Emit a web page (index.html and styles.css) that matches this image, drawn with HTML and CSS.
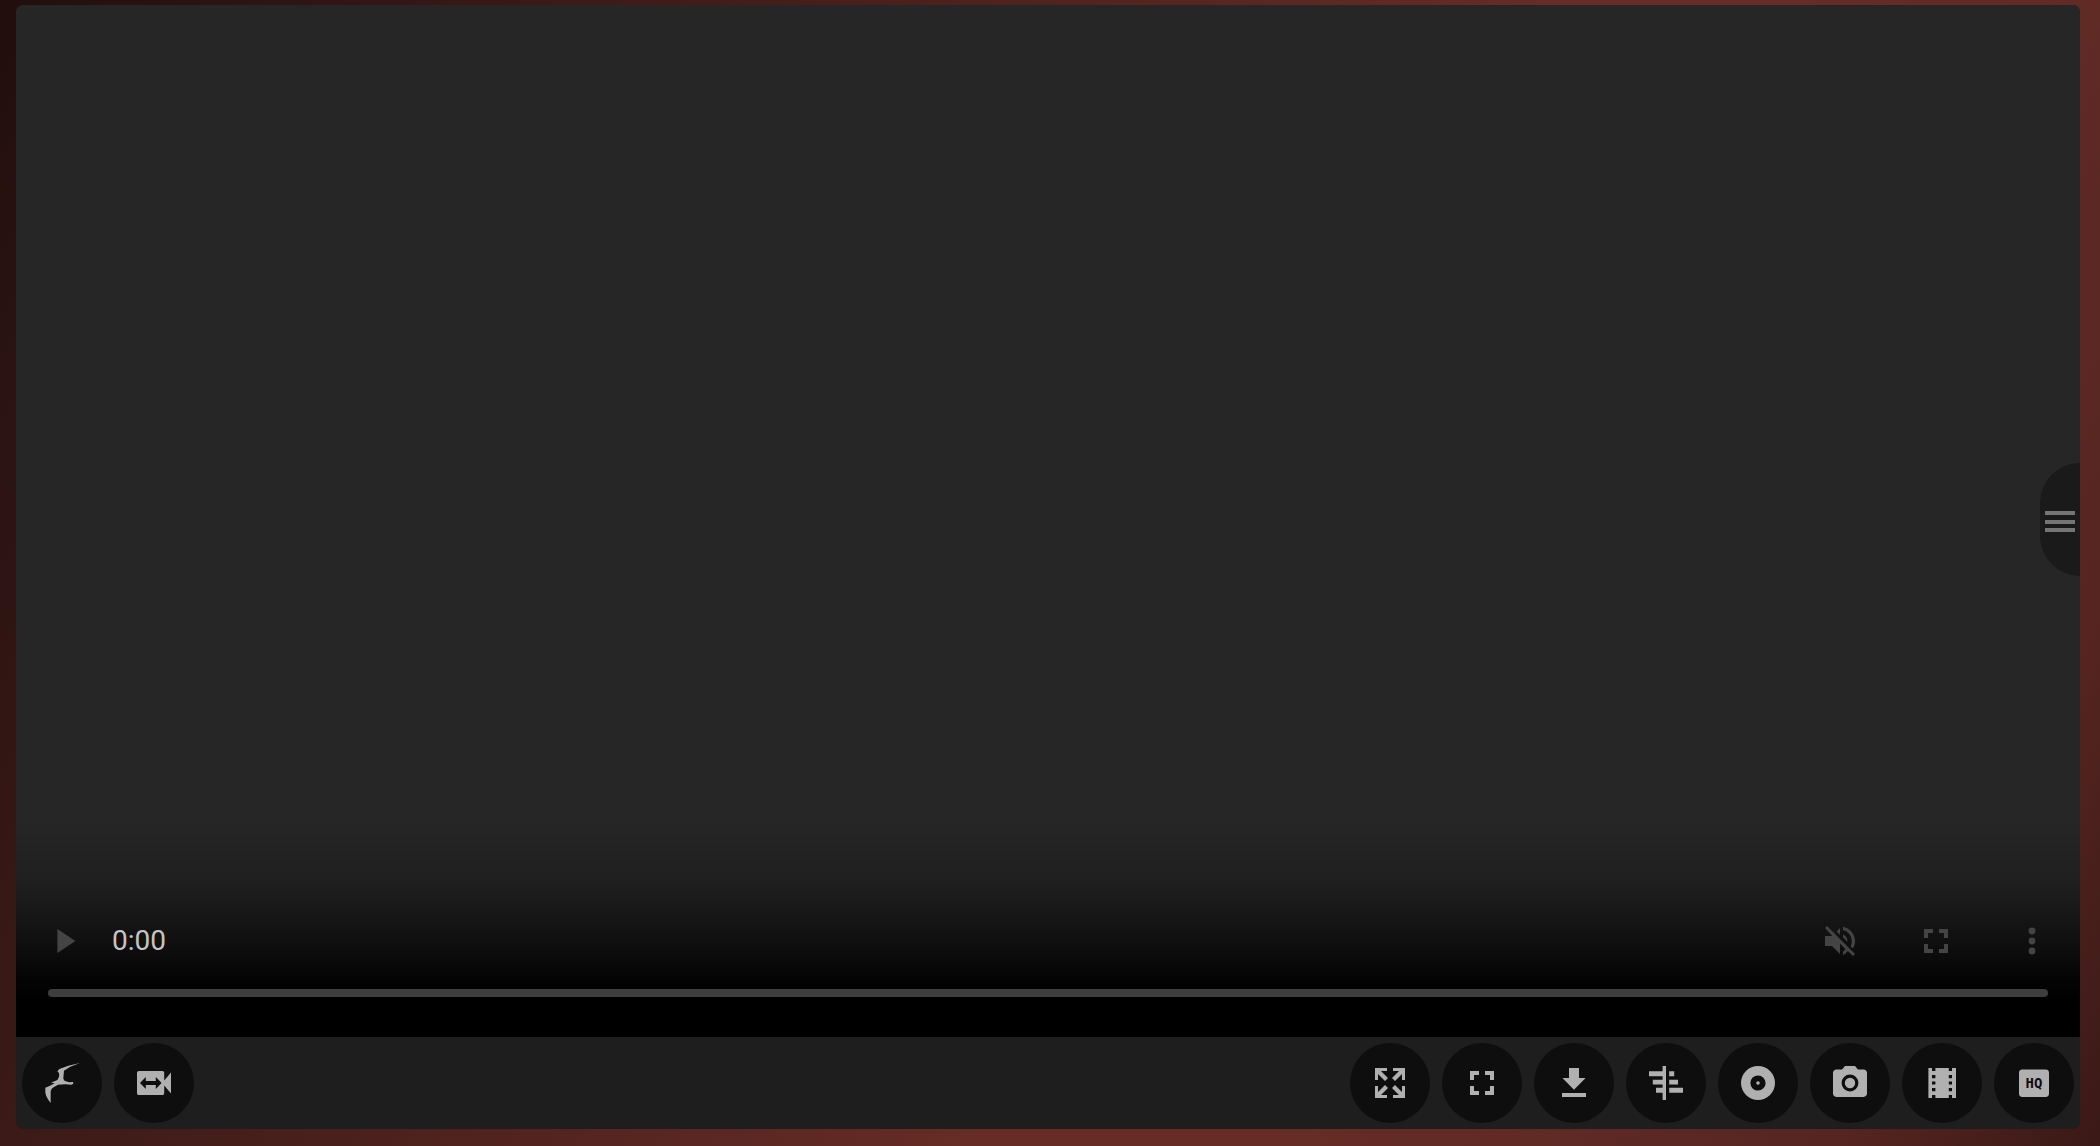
FILE: index.html
```html
<!DOCTYPE html>
<html lang="en">
<head>
  <meta charset="UTF-8">
  <meta name="viewport" content="width=device-width, initial-scale=1.0">
  <title>Video Player</title>
  <link rel="stylesheet" href="styles.css">
</head>
<body>
  <main class="player">
    <!-- Video area -->
    <section class="video" aria-label="Video">
      <button class="side-menu" type="button" aria-label="Open menu">
        <svg class="menu-icon" viewBox="0 0 30 22"><path d="M0 0h30v4H0zM0 9h30v4H0zM0 17h30v4H0z"/></svg>
      </button>

      <div class="controls">
        <div class="control-row">
          <button class="control-button" type="button" aria-label="Play">
            <svg class="icon" viewBox="0 0 24 24"><path d="M7.700 6v12l9-6z"/></svg>
          </button>
          <span class="time">0:00</span>
          <div class="control-group">
            <button class="control-button" type="button" aria-label="Unmute">
              <svg class="icon" viewBox="0 0 24 24"><path d="M5.500 4.500 19.500 18.500l-1 1L15.900 17a7 7 0 0 1-2.400 2.100v-1.700l1.300-1.300-2.800-2.900v5.300l-4-4H4.500v-5h3.700L4.500 5.500zM12 5.500v3.400l-1.700-1.700zM13.500 8.800c1.400.6 2.200 1.800 2.200 3.200v.5l-2.200-2.200zM13.500 4.900c3.400.7 6 3.600 6 7.100 0 1.400-.4 2.700-1.100 3.700l-1.100-1.100c.4-.8.600-1.700.6-2.600 0-2.600-1.800-4.800-4.400-5.500z"/></svg>
            </button>
            <button class="control-button" type="button" aria-label="Full screen">
              <svg class="icon" viewBox="0 0 24 24"><path d="M6 6h4.500v2H8v2.500H6zM13.500 6H18v4.500h-2V8h-2.500zM6 13.500h2V16h2.500v2H6zM16 13.500h2V18h-4.500v-2H16z"/></svg>
            </button>
            <button class="control-button" type="button" aria-label="More options">
              <svg class="icon" viewBox="0 0 24 24"><circle cx="12" cy="7" r="1.700"/><circle cx="12" cy="12" r="1.700"/><circle cx="12" cy="17" r="1.700"/></svg>
            </button>
          </div>
        </div>
        <input class="timeline" type="range" min="0" max="100" value="0" aria-label="Seek">
      </div>
    </section>

    <!-- Bottom toolbar -->
    <nav class="toolbar" aria-label="Video tools">
      <div class="tool-group">
        <button class="tool" type="button" aria-label="Home">
          <svg class="icon icon-bird" viewBox="0 0 108 132"><path d="M108 6 73 14 46 24l-6 7 5 5c2 9-1 16-5 21l-19 8 11 2-14 7-14 6v15c2 11 8 21 16 31V92c1-7 5-11 9-13l13-8 22-1 18 1 6-3-1-5-11 1-11-3c-5-2-6-5-7-9l2-23 19-12z"/></svg>
        </button>
        <button class="tool" type="button" aria-label="Switch video">
          <svg class="icon" viewBox="0 0 24 24"><path fill-rule="evenodd" d="M4.500 6h11.700c.5 0 .9.400.9.900v3.900l3.400-4.100v10.600l-3.400-4.100v3.900c0 .5-.4.900-.9.900H4.500c-.6 0-1-.4-1-.9V6.900c0-.5.4-.9 1-.9zm.5 6 2.900 3v-2h5v2l2.900-3-2.900-3v2h-5V9z"/></svg>
        </button>
      </div>
      <div class="tool-group">
        <button class="tool" type="button" aria-label="Expand">
          <svg class="icon" viewBox="0 0 24 24"><path d="M4.500 4.500h6V6H7.500l3.500 3.500L9.500 11 6 7.500v3H4.500zM13.500 4.500h6v6H18v-3L14.500 11 13 9.500 16.500 6h-3zM9.500 13l1.500 1.500L7.500 18h3v1.500h-6v-6H6v3zM14.500 13l3.500 3.500v-3h1.500v6h-6V18h3L13 14.500z"/></svg>
        </button>
        <button class="tool" type="button" aria-label="Theater mode">
          <svg class="icon" viewBox="0 0 24 24"><path d="M6 6h4.500v2H8v2.500H6zM13.500 6H18v4.500h-2V8h-2.500zM6 13.500h2V16h2.500v2H6zM16 13.500h2V18h-4.500v-2H16z"/></svg>
        </button>
        <button class="tool" type="button" aria-label="Download">
          <svg class="icon" viewBox="0 0 24 24"><path d="M9.500 4.500h5v5h3.300L12 15.400 6.200 9.500h3.300zM6 17h12v2H6z"/></svg>
        </button>
        <button class="tool" type="button" aria-label="Timeline">
          <svg class="icon" viewBox="0 0 24 24"><path d="M10.300 3.500H12v17h-1.700v-3.600H7v-2.500h3.300v-1.700H5.400v-2.300h4.900V8.600H3.500V6.100h6.800zM13.600 6.100h2.500v2.500h-2.500zM13.600 10.400H18v2.300h-4.400zM13.600 14.400h6.900v2.500h-6.900z"/></svg>
        </button>
        <button class="tool" type="button" aria-label="Record">
          <svg class="icon" viewBox="0 0 24 24"><path fill-rule="evenodd" d="M12 3.500a8.500 8.500 0 1 1 0 17 8.500 8.500 0 0 1 0-17zm0 4.700a3.800 3.800 0 1 0 0 7.600 3.800 3.800 0 0 0 0-7.600z"/><circle cx="12" cy="12" r=".9"/></svg>
        </button>
        <button class="tool" type="button" aria-label="Snapshot">
          <svg class="icon" viewBox="0 0 24 24"><path fill-rule="evenodd" d="M9.500 3.500h5L16 5.200h2.800c.9 0 1.700.8 1.700 1.700v10.400c0 .9-.8 1.700-1.700 1.700H5.200c-.9 0-1.700-.8-1.700-1.700V6.900c0-.9.8-1.700 1.700-1.700H8zM12 7.800a4.200 4.200 0 1 0 0 8.400 4.200 4.200 0 0 0 0-8.400z"/><circle cx="12" cy="12" r="2.600"/></svg>
        </button>
        <button class="tool" type="button" aria-label="Filmstrip">
          <svg class="icon" viewBox="0 0 24 24"><path fill-rule="evenodd" d="M5.200 4.500H7V6h1.700V4.500h6.700V6H17V4.500h2v15h-2V18h-1.600v1.500H8.700V18H7v1.500H5.200zM7 8v1.600h1.700V8zm8.400 0v1.600H17V8zM7 11.200v1.600h1.700v-1.600zm8.400 0v1.600H17v-1.600zM7 14.500v1.600h1.700v-1.600zm8.400 0v1.600H17v-1.600z"/></svg>
        </button>
        <button class="tool" type="button" aria-label="HQ">
          <svg class="icon" viewBox="0 0 24 24"><rect x="4.500" y="5.200" width="15" height="13.800" rx="1.700"/><text class="quality" x="12" y="14.600" text-anchor="middle">HQ</text></svg>
        </button>
      </div>
    </nav>
  </main>
</body>
</html>
```

FILE: styles.css
```css
:root {
  --player-color: #262626;
  --toolbar-color: #1e1e1e;
  --tool-color: #0e0e0e;
  --icon-color: #b0b0b0;
  --control-color: #444444;
}

* {
  box-sizing: border-box;
}

body {
  display: flex;
  min-height: 100vh;
  margin: 0;
  padding: 5px 20px 17px 16px;
  background: linear-gradient(116deg, #210f0d 0%, #3b1a17 21%, #672c26 58%, #672c26 68%, #602a25 79%, #562521 90%, #3a1916 100%);
  font-family: Roboto, sans-serif;
}

button {
  padding: 0;
  border: 0;
  cursor: pointer;
}

.player {
  display: flex;
  flex: 1;
  flex-direction: column;
  overflow: hidden;
  border-radius: 7px;
  background: var(--toolbar-color);
}

/* Video */
.video {
  position: relative;
  display: flex;
  flex: 1;
  flex-direction: column;
  justify-content: flex-end;
  background: var(--player-color);
}

.side-menu {
  position: absolute;
  top: 458px;
  right: 0;
  display: flex;
  align-items: center;
  justify-content: center;
  width: 40px;
  height: 113px;
  border-radius: 40px 0 0 40px;
  background: #1a1a1a;
}

.menu-icon {
  width: 30px;
  height: 22px;
  margin-top: 4px;
  fill: #757575;
}

.controls {
  padding: 96px 32px 40px;
  background: linear-gradient(to bottom, transparent 0, rgba(0, 0, 0, 0.18) 60px, rgba(0, 0, 0, 0.6) 122px, rgba(0, 0, 0, 0.88) 155px, #000000 180px);
}

.control-row {
  display: flex;
  align-items: center;
  height: 48px;
  margin-bottom: 24px;
}

.control-group {
  display: flex;
  gap: 48px;
  margin-left: auto;
  margin-right: -8px;
}

.control-button {
  display: flex;
  align-items: center;
  justify-content: center;
  width: 48px;
  height: 48px;
  background: transparent;
  color: var(--control-color);
}

.control-row > .control-button {
  width: 36px;
}

.time {
  margin-left: 28px;
  color: #c4c4c4;
  font-size: 28px;
  line-height: 32px;
}

.icon {
  flex: none;
  width: 48px;
  height: 48px;
  fill: currentColor;
}

.icon-bird {
  width: 36px;
  height: 44px;
}

.timeline {
  display: block;
  width: 100%;
  height: 8px;
  margin: 0;
  border-radius: 4px;
  background: #3e3e3e;
  appearance: none;
}

.timeline::-webkit-slider-thumb {
  width: 0;
  height: 0;
  appearance: none;
}

/* Toolbar */
.toolbar {
  display: flex;
  justify-content: space-between;
  padding: 6px;
}

.tool-group {
  display: flex;
  gap: 12px;
}

.tool {
  display: flex;
  align-items: center;
  justify-content: center;
  width: 80px;
  height: 80px;
  border-radius: 50%;
  background: var(--tool-color);
  color: var(--icon-color);
}

.quality {
  fill: var(--tool-color);
  font-family: "DejaVu Sans Mono", monospace;
  font-size: 7px;
  font-weight: 700;
}
```
